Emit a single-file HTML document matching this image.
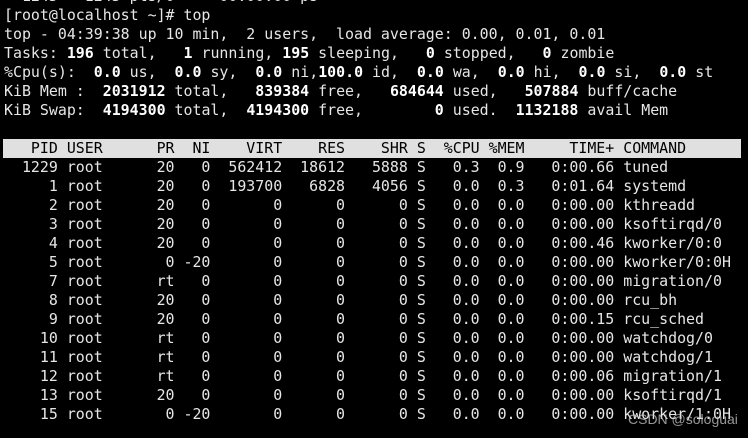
<!DOCTYPE html>
<html><head><meta charset="utf-8"><style>
html,body{margin:0;padding:0;background:#000;width:748px;height:438px;overflow:hidden;position:relative}
pre{position:absolute;left:4px;top:-13.5px;margin:0;font-family:"DejaVu Sans Mono","Liberation Mono",monospace;font-size:14.92px;line-height:19px;color:#e6e6e6;white-space:pre}
b{color:#fff;font-weight:bold}
.hd{position:absolute;left:3px;top:138.5px;width:738px;height:19px;background:#e0e0e0}
.hdt{color:#000}
.wm{position:absolute;left:628px;top:411px;font-family:"Liberation Sans",sans-serif;font-size:14px;color:rgba(200,200,200,0.75)}
</style></head><body>
<div class="hd"></div>
<pre>  1245   1245 pts/0     00:00:00 ps
[root@localhost ~]# top
top - 04:39:38 up 10 min,  2 users,  load average: 0.00, 0.01, 0.01
Tasks: <b>196</b> total,   <b>1</b> running, <b>195</b> sleeping,   <b>0</b> stopped,   <b>0</b> zombie
%Cpu(s):  <b>0.0</b> us,  <b>0.0</b> sy,  <b>0.0</b> ni,<b>100.0</b> id,  <b>0.0</b> wa,  <b>0.0</b> hi,  <b>0.0</b> si,  <b>0.0</b> st
KiB Mem :  <b>2031912</b> total,   <b>839384</b> free,   <b>684644</b> used,   <b>507884</b> buff/cache
KiB Swap:  <b>4194300</b> total,  <b>4194300</b> free,        <b>0</b> used.  <b>1132188</b> avail Mem

<span class="hdt">   PID USER      PR  NI    VIRT    RES    SHR S  %CPU %MEM     TIME+ COMMAND</span>
  1229 root      20   0  562412  18612   5888 S   0.3  0.9   0:00.66 tuned
     1 root      20   0  193700   6828   4056 S   0.0  0.3   0:01.64 systemd
     2 root      20   0       0      0      0 S   0.0  0.0   0:00.00 kthreadd
     3 root      20   0       0      0      0 S   0.0  0.0   0:00.00 ksoftirqd/0
     4 root      20   0       0      0      0 S   0.0  0.0   0:00.46 kworker/0:0
     5 root       0 -20       0      0      0 S   0.0  0.0   0:00.00 kworker/0:0H
     7 root      rt   0       0      0      0 S   0.0  0.0   0:00.00 migration/0
     8 root      20   0       0      0      0 S   0.0  0.0   0:00.00 rcu_bh
     9 root      20   0       0      0      0 S   0.0  0.0   0:00.15 rcu_sched
    10 root      rt   0       0      0      0 S   0.0  0.0   0:00.00 watchdog/0
    11 root      rt   0       0      0      0 S   0.0  0.0   0:00.00 watchdog/1
    12 root      rt   0       0      0      0 S   0.0  0.0   0:00.06 migration/1
    13 root      20   0       0      0      0 S   0.0  0.0   0:00.00 ksoftirqd/1
    15 root       0 -20       0      0      0 S   0.0  0.0   0:00.00 kworker/1:0H</pre>
<div class="wm">CSDN @sologuai</div>
</body></html>
